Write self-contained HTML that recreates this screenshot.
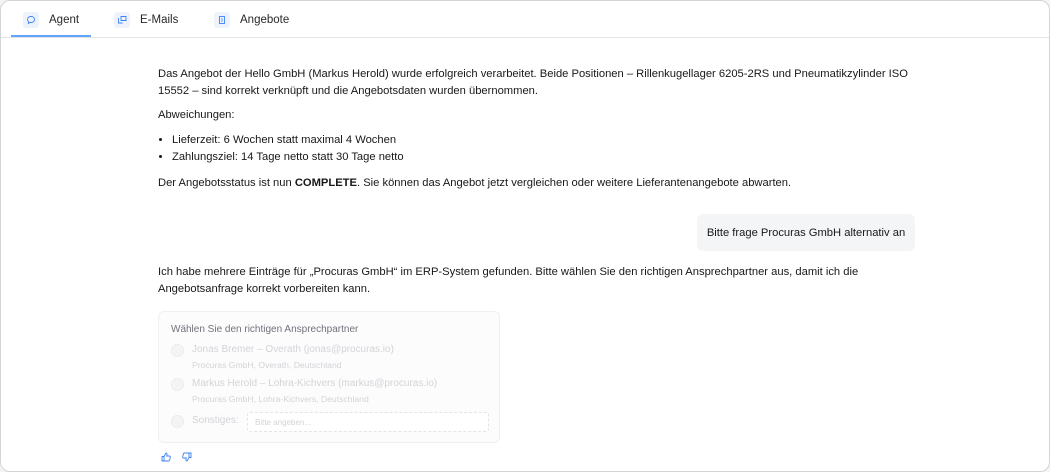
<!DOCTYPE html>
<html><head><meta charset="utf-8"><style>
*{box-sizing:border-box;margin:0;padding:0}
body{width:1050px;height:472px;background:#f4f4f5;font-family:"Liberation Sans",sans-serif;color:#18181b;overflow:hidden}
.card{position:absolute;left:0;top:0;width:1050px;height:472px;background:#fff;border:1px solid #d4d4d8;border-radius:10px;overflow:hidden}
.tabs{height:37px;border-bottom:1px solid #e4e4e7;position:relative}
.tab{position:absolute;top:0;height:37px;display:flex;align-items:center;font-size:11.5px;color:#27272a}
.ic{width:16px;height:16px;background:#eef2fb;border-radius:3px;margin-right:10px;display:flex;align-items:center;justify-content:center}
.ul{position:absolute;left:10px;top:34px;width:80px;height:2px;background:#60a5fa}
.t{position:absolute;font-size:11.2px;line-height:17px}
ul{padding-left:14px}
.bub{position:absolute;left:696px;top:213px;width:218px;height:37px;background:#f4f5f7;border-radius:6px;font-size:11.2px;display:flex;align-items:center;justify-content:center}
.form{position:absolute;left:157px;top:310px;width:342px;height:132px;border:1px solid #f0f0f2;border-radius:6px;background:#fcfcfd}
.fl{position:absolute;font-size:10px;color:#d4d4d8}
.rad{position:absolute;left:12px;width:13px;height:13px;border-radius:50%;border:1px dotted #e4e4e7;background:#f4f4f5}
</style></head><body><div class="card">
<div class="tabs">
<div class="tab" style="left:22px"><div class="ic"><svg width="10" height="10" viewBox="0 0 10 10"><path d="M5 1.5C2.8 1.5 1.5 2.8 1.5 4.5c0 1 .5 1.8 1.2 2.3L2.3 8.5 4.3 7.4C4.5 7.5 4.8 7.5 5 7.5c2.2 0 3.5-1.3 3.5-3S7.2 1.5 5 1.5z" fill="none" stroke="#3b82f6" stroke-width=".9"/></svg></div>Agent</div>
<div class="tab" style="left:113px"><div class="ic"><svg width="10" height="10" viewBox="0 0 10 10"><path d="M1.5 3v5h4M4 1.5h5v4H4z" fill="none" stroke="#3b82f6" stroke-width=".9"/></svg></div>E-Mails</div>
<div class="tab" style="left:213px"><div class="ic"><svg width="10" height="10" viewBox="0 0 10 10"><rect x="2.5" y="1.5" width="5" height="7" fill="none" stroke="#3b82f6" stroke-width=".9"/><path d="M4 4h2M4 6h2" stroke="#3b82f6" stroke-width=".8"/></svg></div>Angebote</div>
<div class="ul"></div>
</div>
<div class="t" style="left:157px;top:65px;width:760px">Das Angebot der Hello GmbH (Markus Herold) wurde erfolgreich verarbeitet. Beide Positionen – Rillenkugellager 6205-2RS und Pneumatikzylinder ISO 15552 – sind korrekt verknüpft und die Angebotsdaten wurden übernommen.</div>
<div class="t" style="left:157px;top:106px">Abweichungen:</div>
<ul class="t" style="left:157px;top:131px"><li>Lieferzeit: 6 Wochen statt maximal 4 Wochen</li><li>Zahlungsziel: 14 Tage netto statt 30 Tage netto</li></ul>
<div class="t" style="left:157px;top:174px">Der Angebotsstatus ist nun <b>COMPLETE</b>. Sie können das Angebot jetzt vergleichen oder weitere Lieferantenangebote abwarten.</div>
<div class="bub">Bitte frage Procuras GmbH alternativ an</div>
<div class="t" style="left:157px;top:263px;width:720px">Ich habe mehrere Einträge für „Procuras GmbH“ im ERP-System gefunden. Bitte wählen Sie den richtigen Ansprechpartner aus, damit ich die Angebotsanfrage korrekt vorbereiten kann.</div>
<div class="form">
<div class="fl" style="left:12px;top:12px;color:#71717a">Wählen Sie den richtigen Ansprechpartner</div>
<div class="rad" style="top:32px"></div><div class="fl" style="left:33px;top:32px">Jonas Bremer – Overath (jonas@procuras.io)</div>
<div class="fl" style="left:33px;top:48px;font-size:8.6px">Procuras GmbH, Overath, Deutschland</div>
<div class="rad" style="top:66px"></div><div class="fl" style="left:33px;top:66px">Markus Herold – Lohra-Kichvers (markus@procuras.io)</div>
<div class="fl" style="left:33px;top:82px;font-size:8.6px">Procuras GmbH, Lohra-Kichvers, Deutschland</div>
<div class="rad" style="top:103px"></div><div class="fl" style="left:33px;top:103px">Sonstiges:</div>
<div style="position:absolute;left:88px;top:100px;width:242px;height:20px;border:1px dashed #e4e4e7;border-radius:3px;background:#fff;font-size:8px;color:#d4d4d8;padding:5px 7px">Bitte angeben...</div>
</div>
<svg style="position:absolute;left:160px;top:451px" width="10" height="10" viewBox="0 0 10 10"><path d="M1 4.5h2v4.5H1zM3 4.5L5 1c1 0 1.2.8 1 1.8L5.7 4h2.8c.6 0 1 .5.8 1L8.5 8.5c-.1.3-.4.5-.8.5H3" fill="none" stroke="#3b82f6" stroke-width=".9"/></svg>
<svg style="position:absolute;left:181px;top:451px" width="10" height="10" viewBox="0 0 10 10"><g transform="rotate(180 5 5)"><path d="M1 4.5h2v4.5H1zM3 4.5L5 1c1 0 1.2.8 1 1.8L5.7 4h2.8c.6 0 1 .5.8 1L8.5 8.5c-.1.3-.4.5-.8.5H3" fill="none" stroke="#3b82f6" stroke-width=".9"/></g></svg>
</div></body></html>
